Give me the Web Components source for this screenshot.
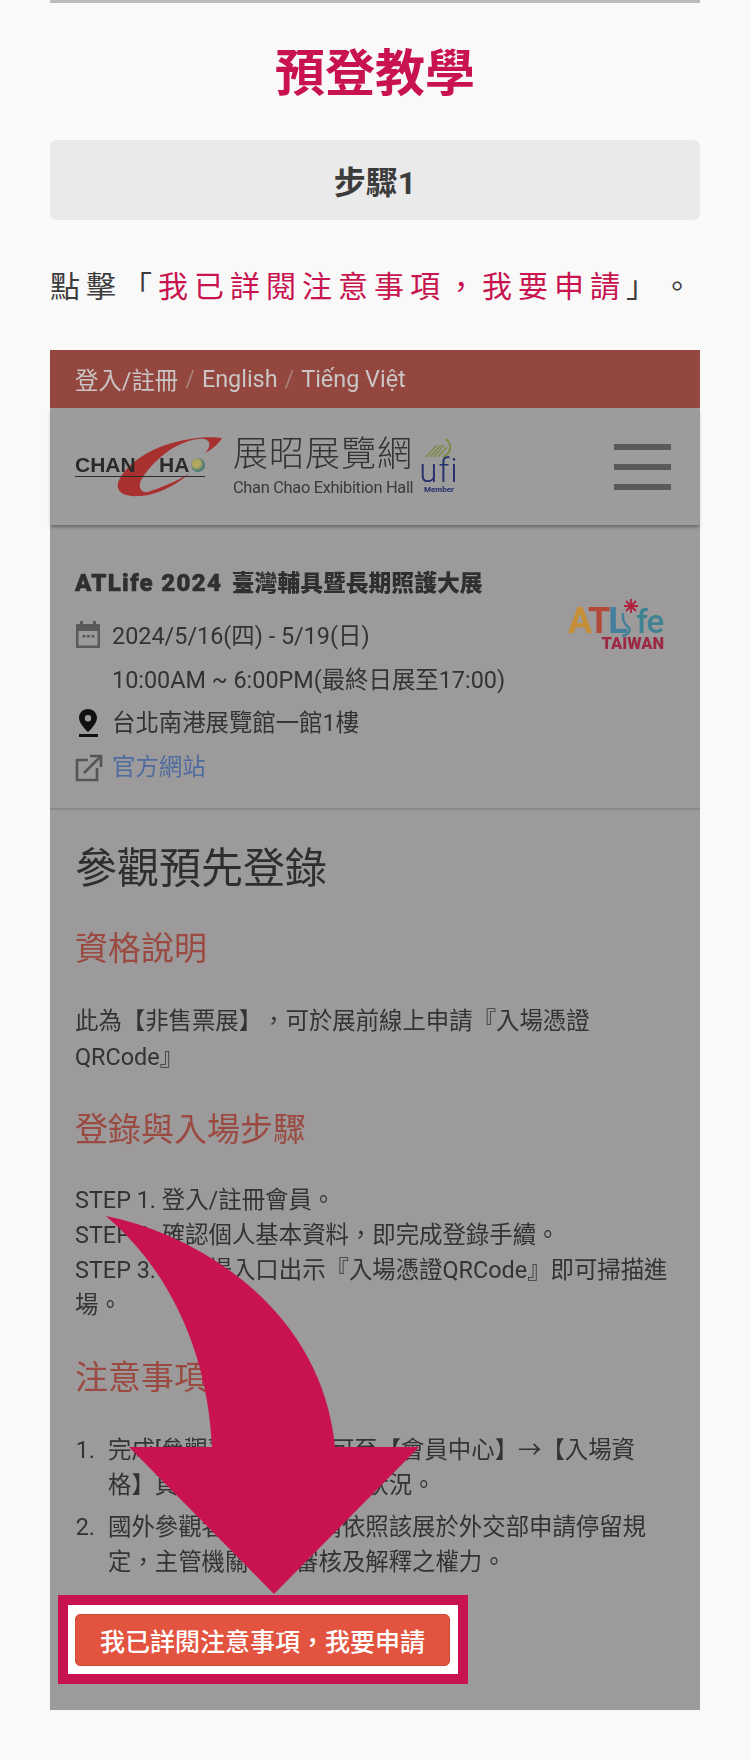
<!DOCTYPE html>
<html lang="zh-Hant">
<head>
<meta charset="utf-8">
<title>預登教學</title>
<style>
html,body{margin:0;padding:0;background:#f9f9f9}
body{font-family:Roboto,"Noto Sans CJK TC",sans-serif;width:750px;height:1760px;overflow:hidden}
</style>
</head>
<body>
<tutorial-page>
  <span slot="title">預登教學</span>
  <span slot="step">步驟1</span>
  <span slot="lead">點擊「<em style="font-style:normal;color:#c8134f">我已詳閱注意事項，我要申請</em>」。</span>
  <phone-shot>
    <phone-topbar></phone-topbar>
    <phone-header></phone-header>
    <event-info></event-info>
    <register-content></register-content>
    <cta-button>我已詳閱注意事項，我要申請</cta-button>
  </phone-shot>
</tutorial-page>

<script>
const FONT = 'Roboto,"Noto Sans CJK TC",sans-serif';
function def(name, html){
  customElements.define(name, class extends HTMLElement{
    constructor(){super();this.attachShadow({mode:'open'}).innerHTML=html;}
  });
}

def('tutorial-page',`<style>
:host{display:block;width:650px;margin:0 50px;border-top:3px solid #bbb;font-family:${FONT};color:#3c3c3c}
h1{margin:0;height:137px;box-sizing:border-box;padding-top:40px;text-align:center;font-size:50px;line-height:62px;font-weight:700;color:#c8134f}
.step{height:80px;background:#eaeaea;border-radius:6px;display:flex;align-items:center;justify-content:center;font-size:32px;font-weight:700;color:#3c3c3c}
p{margin:0;height:130px;box-sizing:border-box;padding-top:43px;font-size:30px;line-height:48px;letter-spacing:6px;white-space:nowrap;text-spacing-trim:space-all}
</style>
<h1><slot name="title"></slot></h1>
<div class="step"><slot name="step"></slot></div>
<p><slot name="lead"></slot></p>
<slot></slot>`);

def('phone-shot',`<style>
:host{display:block;position:relative;width:650px;height:1360px;background:#9c9a9b;overflow:visible}
svg{position:absolute;left:0;top:0;width:650px;height:1360px;z-index:5;pointer-events:none}
</style>
<slot></slot>
<svg viewBox="50 350 650 1360" aria-hidden="true"><path fill="#c8134f" d="M106 1216C200 1235 322 1310 335 1447L419 1447L274 1594L129 1447L212 1447C208 1360 175 1275 106 1216Z"/></svg>`);

def('phone-topbar',`<style>
:host{display:flex;align-items:center;height:58px;padding:0 25px;background:#94473f;color:#c9c6c5;font-size:23.4px;white-space:nowrap;filter:blur(.4px)}
i{font-style:normal;color:#a97f79;margin:0 7px}
</style>登入/註冊<i>/</i>English<i>/</i>Tiếng Việt`);

def('chan-logo',`<style>
:host{display:block;position:relative;width:349px;height:60px;font-family:${FONT};color:#333}
svg{position:absolute;left:43px;top:0;width:104px;height:60px;overflow:visible}
.en{position:absolute;left:0;top:15px;width:130px;height:23px;border-bottom:1.5px solid #2c2c2c;font-family:"Liberation Sans",sans-serif;font-weight:700;font-size:21px;line-height:23px;color:#2a2a2a;white-space:pre}
.globe{position:absolute;left:116px;top:20px;width:14px;height:14px;border-radius:50%;background:radial-gradient(circle at 40% 40%,#b4a860 0 30%,#4f7f74 60%,#41605e)}
.cn{position:absolute;left:158px;top:-2px;font-size:35px;line-height:38px;letter-spacing:1px;font-weight:300;color:#333;white-space:nowrap}
.sub{position:absolute;left:158px;top:41px;font-size:16.4px;line-height:18px;letter-spacing:-.3px;color:#3a3a3a;white-space:nowrap}
</style>
<svg viewBox="0 0 104 60" aria-hidden="true"><path fill="#a8302f" d="M104 0C92 -2 68 -1 42 9C24 16 5 30 0 45C-2 54 6 59 22 58C40 57 60 46 72 35C60 43 42 50 30 54C24 55 21 51 22 45C25 36 40 19 55 10C66 4 78 0 86 1C92 2 94 8 87 15C95 11 101 5 104 0Z"/></svg>
<div class="en">CHAN    HA</div>
<div class="globe"></div>
<div class="cn">展昭展覽網</div>
<div class="sub">Chan Chao Exhibition Hall</div>`);

def('ufi-logo',`<style>
:host{display:flex;flex-direction:column;align-items:center;width:30px;height:57px;color:#23306a;font-family:${FONT}}
svg{width:28px;height:21px;display:block}
b{font-weight:300;font-size:33px;line-height:24px;height:24px;letter-spacing:1px}
small{font-size:8px;font-weight:700;line-height:10px;white-space:nowrap;margin-top:2px}
</style>
<svg viewBox="0 0 28 21" aria-hidden="true"><g fill="none" stroke="#7b8a45" stroke-width="1.4"><path d="M1 19L12 7M5 19L16 7M9 19L19 7M13 19L22 9"/><path stroke-width="2" d="M21 1C27 6 27 15 18 19"/></g></svg>
<b>ufi</b><small>Member</small>`);

def('phone-header',`<style>
:host{display:flex;align-items:flex-start;height:117px;box-sizing:border-box;padding:30px 29px 0 25px;background:#9c9c9c;box-shadow:0 3px 3px -1px rgba(40,40,40,.45);position:relative;z-index:1;filter:blur(.4px)}
.logos{display:flex;flex:1;align-items:flex-start}
.menu{width:57px;display:flex;flex-direction:column;gap:14px;margin-top:6px}
.menu span{display:block;height:6px;background:#5a5a5a}
</style>
<div class="logos"><chan-logo></chan-logo><ufi-logo></ufi-logo></div>
<div class="menu"><span></span><span></span><span></span></div>`);

def('info-row',`<style>
:host{display:flex;align-items:center;height:43.7px;color:#333;font-size:23.4px;white-space:nowrap}
.ic{width:37px;flex:none;display:flex;align-items:center}
</style><div class="ic"><slot name="icon"></slot></div><div><slot></slot></div>`);

def('at-logo',`<style>
:host{display:block;position:absolute;right:36px;top:74px;width:96px;height:52px;font-family:${FONT}}
.at{position:absolute;left:0;top:8px;font-size:36px;line-height:28px;font-weight:700;letter-spacing:-2px;white-space:nowrap}
.i{color:transparent;margin:0 2px 0 1px}
.fe{color:#3f8292;font-weight:500;font-size:33px;letter-spacing:-1px}
.tw{position:absolute;right:0;top:37px;font-size:16.5px;line-height:15px;font-weight:900;color:#9c2a45;white-space:nowrap}
svg{position:absolute;overflow:visible}
</style>
<div class="at"><span style="color:#c48f36">A</span><span style="color:#b24a3a">T</span><span style="color:#44809c">L</span><span class="i">i</span><span class="fe">fe</span></div>
<svg style="left:56px;top:0;width:14px;height:14px" viewBox="0 0 14 14" aria-hidden="true"><path stroke="#b01f3e" stroke-width="1.8" d="M7 0V14M0 7H14M2 2L12 12M12 2L2 12"/></svg>
<svg style="left:52px;top:14px;width:16px;height:24px" viewBox="0 0 16 24" aria-hidden="true"><path fill="none" stroke="#44809c" stroke-width="2.4" d="M3 0C2 8 5 12 9 15C11 18 8 22 2 23"/></svg>
<div class="tw">TAIWAN</div>`);

def('event-info',`<style>
:host{display:block;position:relative;height:285px;box-sizing:border-box;padding:36px 25px 0;border-bottom:2px solid #8a8a8a;background:#9c9a9b;font-family:${FONT};filter:blur(.4px)}
h3{margin:0 0 7px;width:fit-content;font-size:22.8px;line-height:44px;height:44px;font-weight:900;color:#2f2f2f;white-space:nowrap}
h3 span{font-size:24px;letter-spacing:1.3px;-webkit-text-stroke:.5px #2f2f2f;margin-right:4px}
a{color:#4e6c9e;text-decoration:none}
svg{display:block}
</style>
<h3><span>ATLife 2024</span> 臺灣輔具暨長期照護大展</h3>
<at-logo></at-logo>
<info-row><svg slot="icon" width="26" height="28" viewBox="0 0 26 28" aria-hidden="true"><g fill="#5a5a5a"><path d="M1 4H25V28H1ZM3.500 11V25.500H22.500V11Z" fill-rule="evenodd"/><rect x="5" y="1" width="3" height="5"/><rect x="18" y="1" width="3" height="5"/><rect x="7.500" y="15" width="3" height="2.500"/><rect x="12" y="15" width="3" height="2.500"/><rect x="16.500" y="15" width="3" height="2.500"/></g></svg>2024/5/16(四) - 5/19(日)</info-row>
<info-row><span slot="icon"></span>10:00AM ~ 6:00PM(最終日展至17:00)</info-row>
<info-row><svg slot="icon" width="26" height="28" viewBox="0 0 26 28" aria-hidden="true" style="margin-top:4px"><path fill="#111" fill-rule="evenodd" d="M13 0C7.800 0 4 4 4 9C4 15 13 23 13 23C13 23 22 15 22 9C22 4 18.200 0 13 0ZM13 6A3.200 3.200 0 1 1 13 12.400A3.200 3.200 0 0 1 13 6Z"/><rect x="4" y="25" width="19" height="3" fill="#111"/></svg>台北南港展覽館一館1樓</info-row>
<info-row><svg slot="icon" width="28" height="28" viewBox="0 0 28 28" aria-hidden="true" style="margin-top:6px"><g fill="none" stroke="#555" stroke-width="2.600"><path d="M13 6H2V26H22V14"/><path d="M9 19L25 3"/><path d="M15 2H26V13"/></g></svg><a href="#">官方網站</a></info-row>`);

def('section-title',`<style>
:host{display:block;font-size:33px;line-height:44px;color:#9b4a42;font-weight:400;white-space:nowrap}
</style><slot></slot>`);

def('register-content',`<style>
:host{display:block;box-sizing:border-box;height:805px;padding:34px 25px 0;color:#333;font-size:23.4px;line-height:35px;font-family:${FONT};filter:blur(.4px);text-spacing-trim:space-all}
h2{margin:0;font-size:42px;line-height:50px;font-weight:400;color:#2e2e2e;white-space:nowrap}
section-title{margin-top:33px}
p{margin:0;white-space:nowrap}
.a{margin-top:32px}
.b{margin-top:31px}
.c{margin-top:33px}
.list{display:grid;grid-template-columns:33px 1fr;row-gap:7px;white-space:nowrap}
.n{text-align:right;padding-right:9px;position:relative;left:-4px}
</style>
<h2>參觀預先登錄</h2>
<section-title>資格說明</section-title>
<p class="a" style="line-height:36px">此為【非售票展】，可於展前線上申請『入場憑證<br>QRCode』</p>
<section-title>登錄與入場步驟</section-title>
<p class="b">STEP 1. 登入/註冊會員。<br>STEP 2. 確認個人基本資料，即完成登錄手續。<br>STEP 3. 於展場入口出示『入場憑證QRCode』即可掃描進<br>場。</p>
<section-title>注意事項</section-title>
<div class="list c">
<div class="n">1.</div><div>完成[參觀預先登錄]後可至【會員中心】→【入場資<br>格】頁面查看憑證及使用狀況。</div>
<div class="n">2.</div><div>國外參觀者入境時，請依照該展於外交部申請停留規<br>定，主管機關保有審核及解釋之權力。</div>
</div>`);

def('cta-button',`<style>
:host{display:block;position:absolute;left:25px;top:1264px;width:375px;height:52px;z-index:4}
.ring{position:absolute;left:-17px;right:-18px;top:-19px;bottom:-18px;background:#fff;border:10px solid #c8134f}
.btn{position:absolute;inset:0;box-sizing:border-box;background:#e25440;border:1px solid #cf4c3a;border-radius:5px;color:#fff;font-size:25px;font-weight:500;font-family:${FONT};display:flex;align-items:center;justify-content:center;white-space:nowrap}
</style><div class="ring"></div><div class="btn"><slot></slot></div>`);
</script>
</body>
</html>
